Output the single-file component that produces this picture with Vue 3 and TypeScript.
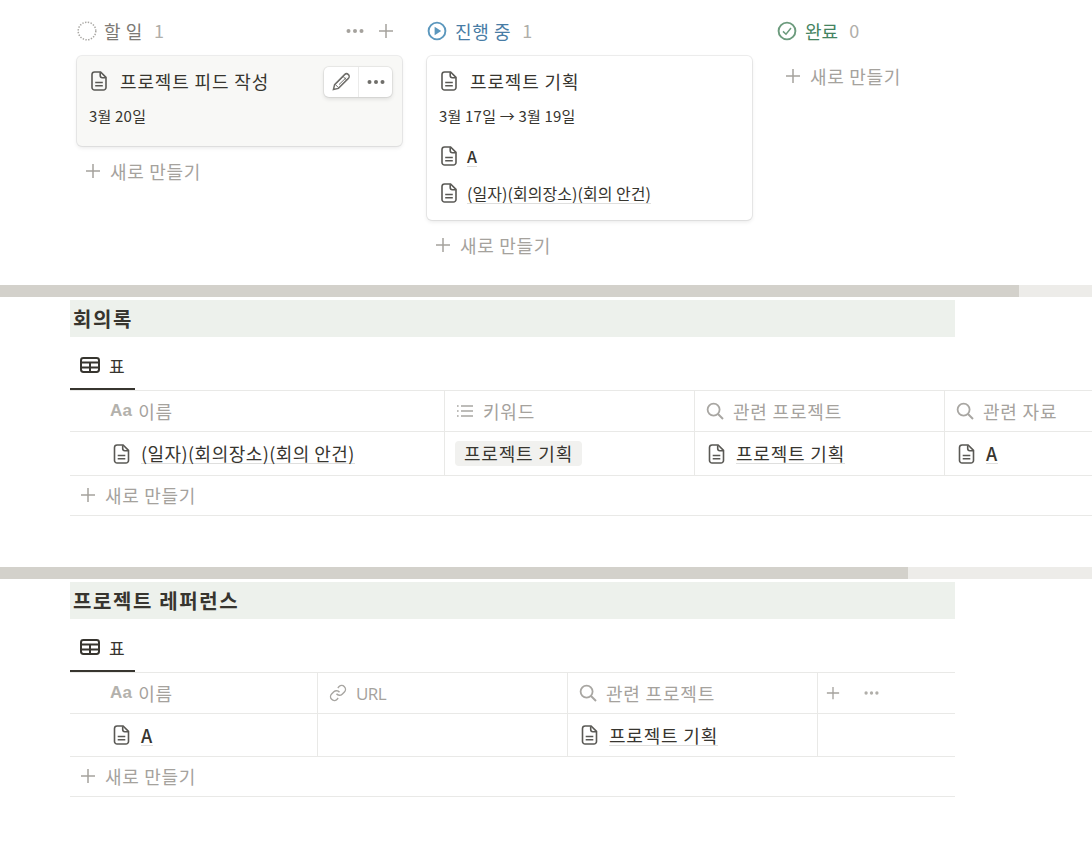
<script setup lang="ts">
interface Column {
  label: string
  count: number
  tone: string
}

const columns: Column[] = [
  { label: '할 일', count: 1, tone: 'todo' },
  { label: '진행 중', count: 1, tone: 'doing' },
  { label: '완료', count: 0, tone: 'done' },
]
</script>

<template>
  <div class="page">
    <svg class="defs" aria-hidden="true">
      <symbol id="doc" viewBox="0 0 16 20">
        <path d="M3.6 1H9.6L15 6.4V16.4A2.6 2.6 0 0 1 12.4 19H3.6A2.6 2.6 0 0 1 1 16.4V3.6A2.6 2.6 0 0 1 3.6 1Z" fill="none" stroke="#5a5955" stroke-width="1.6" />
        <path d="M9.2 1.2V4.6A2.1 2.1 0 0 0 11.3 6.7H14.8" fill="none" stroke="#5a5955" stroke-width="1.6" />
        <path d="M4.2 11.4H11.8M4.2 14.8H11.8" fill="none" stroke="#5a5955" stroke-width="1.5" />
      </symbol>
      <symbol id="plus" viewBox="0 0 16 16">
        <path d="M8 1V15M1 8H15" fill="none" stroke="currentColor" stroke-width="1.5" />
      </symbol>
      <symbol id="dots" viewBox="0 0 18 4">
        <circle cx="2.5" cy="2" r="2" fill="currentColor" />
        <circle cx="9" cy="2" r="2" fill="currentColor" />
        <circle cx="15.5" cy="2" r="2" fill="currentColor" />
      </symbol>
      <symbol id="table" viewBox="0 0 20 16">
        <rect x="1" y="1" width="18" height="14" rx="2.4" fill="none" stroke="currentColor" stroke-width="2" />
        <path d="M1 5.6H19M1 10.4H19M10 5.6V15" fill="none" stroke="currentColor" stroke-width="2" />
      </symbol>
      <symbol id="search" viewBox="0 0 18 18">
        <circle cx="7.6" cy="7.6" r="6" fill="none" stroke="currentColor" stroke-width="1.8" />
        <path d="M12 12L17 17" fill="none" stroke="currentColor" stroke-width="2" />
      </symbol>
      <symbol id="list" viewBox="0 0 18 14">
        <path d="M5 2H17M5 7H17M5 12H17" fill="none" stroke="currentColor" stroke-width="1.5" />
        <path d="M1 2H2.6M1 7H2.6M1 12H2.6" fill="none" stroke="currentColor" stroke-width="1.5" />
      </symbol>
      <symbol id="link" viewBox="0 0 24 24">
        <path d="M10 13a5 5 0 0 0 7.54.54l3-3a5 5 0 0 0-7.07-7.07l-1.72 1.71" fill="none" stroke="currentColor" stroke-width="1.9" />
        <path d="M14 11a5 5 0 0 0-7.54-.54l-3 3a5 5 0 0 0 7.07 7.07l1.71-1.71" fill="none" stroke="currentColor" stroke-width="1.9" />
      </symbol>
    </svg>

    <section class="board">
      <div v-for="col in columns" :key="col.tone" class="column">
        <header class="col-head" :class="col.tone">
          <svg v-if="col.tone === 'todo'" class="status" viewBox="0 0 20 20">
            <circle cx="10" cy="10" r="8.8" fill="none" stroke="#a8a6a2" stroke-width="1.5" stroke-dasharray="1.4 1.4" />
          </svg>
          <svg v-else-if="col.tone === 'doing'" class="status" viewBox="0 0 20 20">
            <circle cx="10" cy="10" r="8.4" fill="none" stroke="#5b97bd" stroke-width="1.9" />
            <path d="M7.6 5.8L14.2 10L7.6 14.2Z" fill="#5b97bd" />
          </svg>
          <svg v-else class="status" viewBox="0 0 20 20">
            <circle cx="10" cy="10" r="8.4" fill="none" stroke="#6c9b7d" stroke-width="1.9" />
            <path d="M6 10.4L9 13.2L14 7" fill="none" stroke="#6c9b7d" stroke-width="1.5" />
          </svg>
          <span class="col-label">{{ col.label }}</span>
          <span class="col-count">{{ col.count }}</span>
          <span v-if="col.tone === 'todo'" class="col-tools">
            <svg class="dots-sm"><use href="#dots" /></svg>
            <svg class="plus-md"><use href="#plus" /></svg>
          </span>
        </header>

        <article v-if="col.tone === 'todo'" class="card hovered">
          <div class="card-title">
            <svg class="doc"><use href="#doc" /></svg>
            <span>프로젝트 피드 작성</span>
          </div>
          <div class="card-date">3월 20일</div>
          <div class="card-actions">
            <span class="action">
              <svg class="pencil" viewBox="0 0 20 20">
                <path d="M2.4 17.6L3.6 12.6L13.6 2.6A2 2 0 0 1 17.4 6.4L7.4 16.4Z" fill="none" stroke="#6f6e6a" stroke-width="1.5" />
                <path d="M12 4.4L15.6 8M4.2 12.4L7.6 15.8M6 10.4L13.2 3.4M8 12.6L15.2 5.6" fill="none" stroke="#6f6e6a" stroke-width="1" />
              </svg>
            </span>
            <span class="action">
              <svg class="dots-sm dark"><use href="#dots" /></svg>
            </span>
          </div>
        </article>

        <article v-else-if="col.tone === 'doing'" class="card">
          <div class="card-title">
            <svg class="doc"><use href="#doc" /></svg>
            <span>프로젝트 기획</span>
          </div>
          <div class="card-date">3월 17일 → 3월 19일</div>
          <div class="card-rel first">
            <svg class="doc"><use href="#doc" /></svg>
            <span class="lnk bold">A</span>
          </div>
          <div class="card-rel">
            <svg class="doc"><use href="#doc" /></svg>
            <span class="lnk">(일자)(회의장소)(회의 안건)</span>
          </div>
        </article>

        <div class="new-card" :class="{ tight: col.tone === 'done' }">
          <svg class="plus-md"><use href="#plus" /></svg>
          <span>새로 만들기</span>
        </div>
      </div>
    </section>

    <div class="scrollbar"><div class="thumb thumb-a"></div></div>

    <section class="db">
      <h2 class="band">회의록</h2>
      <div class="tabs">
        <div class="tab">
          <svg class="table-ic"><use href="#table" /></svg>
          <span>표</span>
        </div>
      </div>
      <div class="grid grid-a">
        <div class="cell head name"><span class="aa">Aa</span><span>이름</span></div>
        <div class="cell head"><svg class="prop list-ic"><use href="#list" /></svg><span>키워드</span></div>
        <div class="cell head"><svg class="prop"><use href="#search" /></svg><span>관련 프로젝트</span></div>
        <div class="cell head last"><svg class="prop"><use href="#search" /></svg><span>관련 자료</span></div>

        <div class="cell row name"><svg class="doc"><use href="#doc" /></svg><span class="lnk paren">(일자)(회의장소)(회의 안건)</span></div>
        <div class="cell row tag-cell"><span class="tag">프로젝트 기획</span></div>
        <div class="cell row"><svg class="doc"><use href="#doc" /></svg><span class="lnk">프로젝트 기획</span></div>
        <div class="cell row last"><svg class="doc"><use href="#doc" /></svg><span class="lnk bold">A</span></div>
      </div>
      <div class="new-row">
        <svg class="plus-md"><use href="#plus" /></svg>
        <span>새로 만들기</span>
      </div>
    </section>

    <div class="scrollbar second-bar"><div class="thumb thumb-b"></div></div>

    <section class="db">
      <h2 class="band">프로젝트 레퍼런스</h2>
      <div class="tabs">
        <div class="tab">
          <svg class="table-ic"><use href="#table" /></svg>
          <span>표</span>
        </div>
      </div>
      <div class="grid grid-b">
        <div class="cell head name"><span class="aa">Aa</span><span>이름</span></div>
        <div class="cell head"><svg class="prop"><use href="#link" /></svg><span class="latin">URL</span></div>
        <div class="cell head"><svg class="prop"><use href="#search" /></svg><span>관련 프로젝트</span></div>
        <div class="cell head last tools">
          <svg class="plus-sm"><use href="#plus" /></svg>
          <svg class="dots-sm light"><use href="#dots" /></svg>
        </div>

        <div class="cell row name"><svg class="doc"><use href="#doc" /></svg><span class="lnk bold">A</span></div>
        <div class="cell row"></div>
        <div class="cell row"><svg class="doc"><use href="#doc" /></svg><span class="lnk">프로젝트 기획</span></div>
        <div class="cell row last"></div>
      </div>
      <div class="new-row narrow">
        <svg class="plus-md"><use href="#plus" /></svg>
        <span>새로 만들기</span>
      </div>
    </section>
  </div>
</template>

<style>
html,
body {
  margin: 0;
  background: #fff;
}
</style>

<style scoped>
.page {
  width: 1092px;
  height: 846px;
  overflow: hidden;
  position: relative;
  background: #fff;
  color: #37352f;
  font-family: "Noto Sans CJK KR", "Noto Sans", sans-serif;
  font-size: 18px;
}

.defs {
  position: absolute;
  width: 0;
  height: 0;
}

.board {
  display: flex;
  gap: 25px;
  height: 285px;
  padding: 18px 0 0 77px;
  box-sizing: border-box;
}

.column {
  width: 325px;
  flex: none;
}

.col-head {
  display: flex;
  align-items: center;
  height: 26px;
  font-size: 18px;
  margin-bottom: 12px;
}

.status {
  width: 20px;
  height: 20px;
  margin-right: 8px;
  flex: none;
}

.col-head.todo .status {
  margin-right: 7px;
}

.col-head.todo .col-label {
  color: #7d7a75;
}

.col-head.doing .col-label {
  color: #487ca5;
}

.col-head.done .col-label {
  color: #448361;
  letter-spacing: 0;
}

.col-label {
  letter-spacing: 0.6px;
}

.col-count {
  margin-left: 11px;
  margin-bottom: 2px;
  color: #b0aea9;
}

.col-tools {
  margin-left: auto;
  margin-right: 8px;
  display: flex;
  align-items: center;
  gap: 14px;
  color: #a5a29d;
}

.dots-sm {
  width: 18px;
  height: 4px;
}

.plus-md {
  width: 16px;
  height: 16px;
  color: #a5a29d;
  flex: none;
}

.card {
  position: relative;
  box-sizing: border-box;
  background: #fff;
  border-radius: 5px;
  box-shadow: 0 0 0 1px rgba(15, 15, 15, 0.07), 0 2px 4px rgba(15, 15, 15, 0.09);
  padding: 12px 12px 15px;
}

.card.hovered {
  background: #f8f8f6;
  height: 90px;
}

.card-title {
  display: flex;
  align-items: center;
  gap: 13px;
  height: 26px;
  font-size: 18px;
  letter-spacing: 0.85px;
  padding-left: 2px;
}

.doc {
  width: 16px;
  height: 20px;
  flex: none;
}

.card-date {
  margin-top: 12px;
  font-size: 15px;
  line-height: 20px;
  letter-spacing: 0.2px;
}

.card-rel {
  display: flex;
  align-items: center;
  gap: 10px;
  height: 24px;
  margin-top: 13px;
  padding-left: 2px;
  font-size: 16px;
  letter-spacing: 0.05px;
}

.card-rel.first {
  margin-top: 18px;
}

.card-actions {
  position: absolute;
  top: 11px;
  right: 10px;
  display: flex;
  height: 30px;
  background: #fff;
  border-radius: 5px;
  box-shadow: 0 0 0 1px rgba(15, 15, 15, 0.06), 0 2px 4px rgba(15, 15, 15, 0.12);
}

.action {
  width: 34px;
  display: flex;
  align-items: center;
  justify-content: center;
}

.action + .action {
  width: 33px;
  border-left: 1px solid #ebebea;
}

.pencil {
  width: 20px;
  height: 20px;
}

.dark {
  color: #6f6e6a;
}

.new-card {
  display: flex;
  align-items: center;
  gap: 9px;
  height: 26px;
  margin-top: 12px;
  padding-left: 8px;
  color: #a5a29d;
  font-size: 18px;
  letter-spacing: 0.7px;
}

.new-card.tight {
  margin-top: 19px;
}

.scrollbar {
  height: 12px;
  background: #edece9;
}

.thumb {
  height: 100%;
  background: #d3d1cb;
}

.thumb-a {
  width: 1019px;
}

.thumb-b {
  width: 908px;
}

.second-bar {
  margin-top: 51px;
}

.db {
  padding: 3px 0 0 70px;
  overflow: hidden;
}

.band {
  width: 885px;
  height: 37px;
  margin: 0;
  background: #edf1ec;
  box-sizing: border-box;
  padding-left: 3px;
  font-size: 20px;
  font-weight: 700;
  line-height: 37px;
  letter-spacing: 1.6px;
  color: #37352f;
  white-space: nowrap;
}

.tabs {
  height: 53px;
  display: flex;
  align-items: flex-end;
}

.tab {
  width: 65px;
  height: 44px;
  box-sizing: border-box;
  display: flex;
  align-items: center;
  gap: 9px;
  padding: 0 0 4px 10px;
  border-bottom: 2px solid #37352f;
  font-size: 17px;
}

.table-ic {
  width: 20px;
  height: 16px;
}

.grid {
  display: grid;
  border-top: 1px solid #e9e9e7;
  box-sizing: border-box;
  color: #37352f;
}

.grid-a {
  grid-template-columns: 375px 250px 250px 250px;
  width: 1125px;
}

.grid-b {
  grid-template-columns: 248px 250px 250px 137px;
  width: 885px;
}

.cell {
  display: flex;
  align-items: center;
  box-sizing: border-box;
  border-right: 1px solid #e9e9e7;
  border-bottom: 1px solid #e9e9e7;
  padding-left: 13px;
  gap: 11px;
  font-size: 18px;
  letter-spacing: 0.8px;
}

.cell.last {
  border-right: 0;
}

.cell.head {
  height: 41px;
  color: #a5a29d;
  padding-left: 11px;
  gap: 9px;
}

.cell.row {
  height: 43px;
}

.grid-a .cell.row {
  height: 44px;
}

.cell.name {
  padding-left: 43px;
}

.cell.head.name {
  padding-left: 40px;
  gap: 6px;
}

.cell.name .doc,
.cell.row .doc {
  width: 17px;
}

.aa {
  font-family: "Liberation Sans", sans-serif;
  font-weight: 700;
  font-size: 17px;
  letter-spacing: 0.2px;
  color: #b3b1ac;
}

.prop {
  width: 18px;
  height: 18px;
  flex: none;
  color: #a8a6a2;
}

.list-ic {
  height: 14px;
}

.latin {
  font-family: "Open Sans", sans-serif;
  font-size: 17px;
  letter-spacing: -0.6px;
}

.lnk {
  border-bottom: 1px solid rgba(55, 53, 47, 0.16);
  line-height: 20px;
  white-space: nowrap;
}

.paren {
  letter-spacing: 0.45px;
}

.bold {
  font-weight: 500;
}

.tag-cell {
  padding-left: 10px;
}

.tag {
  background: #f1f1ef;
  border-radius: 4px;
  height: 25px;
  line-height: 24px;
  padding: 0 9px;
  white-space: nowrap;
}

.cell.head.tools {
  gap: 24px;
  padding-left: 8px;
}

.plus-sm {
  width: 14px;
  height: 14px;
  color: #a5a29d;
}

.light {
  color: #b0aea9;
  width: 15px;
}

.new-row {
  display: flex;
  align-items: center;
  gap: 9px;
  height: 40px;
  padding: 0 0 2px 10px;
  box-sizing: border-box;
  border-bottom: 1px solid #e9e9e7;
  color: #a5a29d;
  font-size: 18px;
  letter-spacing: 0.7px;
}

.new-row.narrow {
  width: 885px;
}
</style>
